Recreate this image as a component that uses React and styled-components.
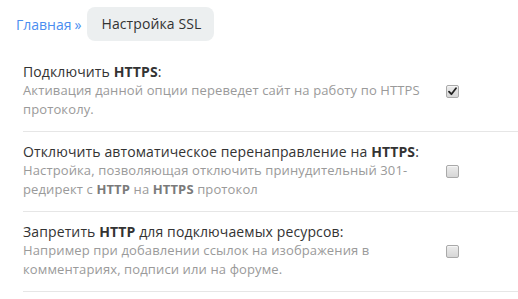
import React from 'react';
import styled, { createGlobalStyle } from 'styled-components';

const GlobalStyle = createGlobalStyle`
  body {
    margin: 0;
    background: #fff;
    font-family: "Open Sans", "Noto Sans", Arial, sans-serif;
  }
`;

const Page = styled.div`
  padding: 7px 0 0 16px;
`;

const Breadcrumbs = styled.nav`
  display: flex;
  align-items: center;
  font-size: 14px;
  height: 34px;
`;

const CrumbLink = styled.a`
  color: #4a8df0;
  text-decoration: none;
`;

const CrumbSep = styled.span`
  color: #4a8df0;
  margin: 0 6px 0 3px;
`;

const CrumbCurrent = styled.span`
  display: inline-block;
  background: #eceff0;
  color: #333;
  border-radius: 8px;
  height: 34px;
  line-height: 34px;
  padding: 0 13px 0 14px;
  letter-spacing: 0.1px;
`;

const Options = styled.div`
  margin: 11px 0 0 7px;
`;

const Option = styled.label`
  display: grid;
  grid-template-columns: 415px 1fr;
  align-items: center;
  padding: 11px 0 12px;
  border-bottom: 1px solid #e6e6e6;
  cursor: pointer;
`;

const Title = styled.div`
  font-size: 14px;
  line-height: 18px;
  letter-spacing: 0.12px;
  color: #333;
  b { font-weight: 700; }
`;

const Desc = styled.div`
  font-size: 13px;
  line-height: 19px;
  letter-spacing: 0.12px;
  color: #9a9a9a;
  b { font-weight: 700; color: #7a7a7a; }
`;

const Box = styled.span`
  display: flex;
  align-items: center;
  justify-content: center;
  width: 11px;
  height: 11px;
  margin-left: 8px;
  border: 1px solid #a9a9a9;
  border-radius: 2px;
  background: linear-gradient(#ececec, #d6d6d6);
  box-shadow: inset 0 1px 0 #f6f6f6;
`;

const Check = ({ on }) => (
  <Box>
    {on && (
      <svg width="9" height="9" viewBox="0 0 9 9">
        <path d="M1 4.6 L3.4 7.2 L8 1.2" fill="none" stroke="#222" strokeWidth="1.8" strokeLinecap="round" strokeLinejoin="round" />
      </svg>
    )}
  </Box>
);

const options = [
  {
    title: <>Подключить <b>HTTPS</b>:</>,
    desc: <>Активация данной опции переведет сайт на работу по HTTPS протоколу.</>,
    on: true,
  },
  {
    title: <>Отключить автоматическое перенаправление на <b>HTTPS</b>:</>,
    desc: <>Настройка, позволяющая отключить принудительный 301-редирект с <b>HTTP</b> на <b>HTTPS</b> протокол</>,
    on: false,
  },
  {
    title: <>Запретить <b>HTTP</b> для подключаемых ресурсов:</>,
    desc: <>Например при добавлении ссылок на изображения в комментариях, подписи или на форуме.</>,
    on: false,
  },
];

export default function App() {
  return (
    <Page>
      <GlobalStyle />
      <Breadcrumbs>
        <CrumbLink href="#">Главная</CrumbLink>
        <CrumbSep>»</CrumbSep>
        <CrumbCurrent>Настройка SSL</CrumbCurrent>
      </Breadcrumbs>
      <Options>
        {options.map((o, i) => (
          <Option key={i}>
            <div>
              <Title>{o.title}</Title>
              <Desc>{o.desc}</Desc>
            </div>
            <Check on={o.on} />
          </Option>
        ))}
      </Options>
    </Page>
  );
}
